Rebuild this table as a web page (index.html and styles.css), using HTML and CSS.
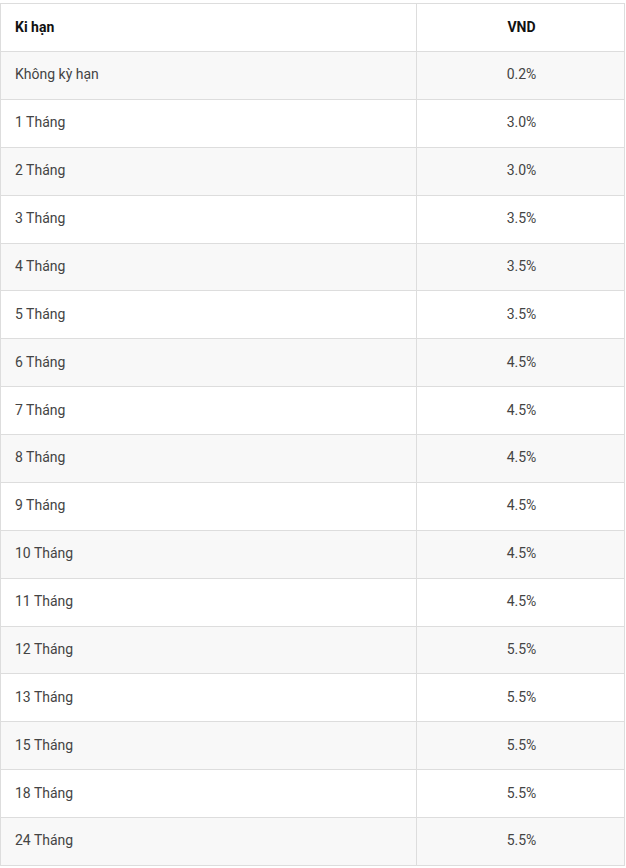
FILE: index.html
```html
<!DOCTYPE html>
<html lang="vi">
<head>
<meta charset="utf-8">
<link rel="stylesheet" href="styles.css">
</head>
<body>
<table class="rates">
  <thead>
    <tr><th class="term">Ki hạn</th><th class="val">VND</th></tr>
  </thead>
  <tbody>
    <tr><td class="term">Không kỳ hạn</td><td class="val">0.2%</td></tr>
    <tr><td class="term">1 Tháng</td><td class="val">3.0%</td></tr>
    <tr><td class="term">2 Tháng</td><td class="val">3.0%</td></tr>
    <tr><td class="term">3 Tháng</td><td class="val">3.5%</td></tr>
    <tr><td class="term">4 Tháng</td><td class="val">3.5%</td></tr>
    <tr><td class="term">5 Tháng</td><td class="val">3.5%</td></tr>
    <tr><td class="term">6 Tháng</td><td class="val">4.5%</td></tr>
    <tr><td class="term">7 Tháng</td><td class="val">4.5%</td></tr>
    <tr><td class="term">8 Tháng</td><td class="val">4.5%</td></tr>
    <tr><td class="term">9 Tháng</td><td class="val">4.5%</td></tr>
    <tr><td class="term">10 Tháng</td><td class="val">4.5%</td></tr>
    <tr><td class="term">11 Tháng</td><td class="val">4.5%</td></tr>
    <tr><td class="term">12 Tháng</td><td class="val">5.5%</td></tr>
    <tr><td class="term">13 Tháng</td><td class="val">5.5%</td></tr>
    <tr><td class="term">15 Tháng</td><td class="val">5.5%</td></tr>
    <tr><td class="term">18 Tháng</td><td class="val">5.5%</td></tr>
    <tr><td class="term">24 Tháng</td><td class="val">5.5%</td></tr>
  </tbody>
</table>
</body>
</html>
```
FILE: styles.css
```css
html, body {
  margin: 0;
  padding: 0;
  background: #fff;
}
body {
  padding-top: 3px;
  font-family: Roboto, "Liberation Sans", Arial, sans-serif;
  font-size: 14px;
  color: #444;
}
.rates {
  width: 625px;
  border-collapse: collapse;
  table-layout: fixed;
}
.rates th, .rates td {
  border: 1px solid #ddd;
  padding: 0 15px 2px 14px;
  line-height: 20px;
  text-align: left;
  vertical-align: middle;
}
.rates th {
  height: 45px;
  font-weight: bold;
  color: #111;
}
.rates td {
  height: 44.875px;
}
.rates .term {
  width: 386px;
}
.rates .val {
  padding-left: 16px;
  padding-right: 14px;
  text-align: center;
}
.rates tbody tr:nth-child(odd) {
  background: #f8f8f8;
}
```
